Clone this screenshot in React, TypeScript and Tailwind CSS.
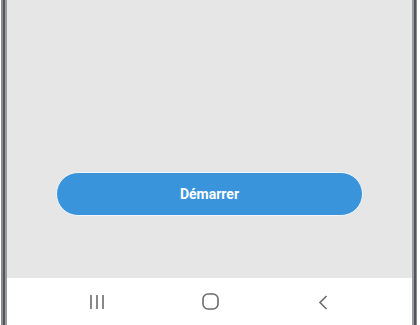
export default function App() {
  return (
    <div className="flex h-[325px] w-[420px] overflow-hidden bg-white font-['Roboto',sans-serif]">
      <div className="w-px" />
      <div className="flex w-[6px]">
        <div className="w-[2px] bg-[#8a8a93]" />
        <div className="w-[2px] bg-[#55555c]" />
        <div className="w-[2px] bg-[#9a9aa3]" />
      </div>
      <div className="flex flex-1 flex-col">
        <div className="flex h-[278px] flex-col justify-end bg-[#e6e6e6] px-[49px] pb-[62px]">
          <button className="flex h-[44px] w-full items-center justify-center rounded-full border border-[#f2f6fa] bg-[#3a94dc] text-[14px] font-bold text-white">
            Démarrer
          </button>
        </div>
        <div className="relative flex-1 bg-white">
          <svg className="absolute left-[82px] top-[16px]" width="16" height="16" viewBox="0 0 16 16">
            <path d="M2 1v14M8 1v14M14 1v14" stroke="#6b6b6b" strokeWidth="1.6" fill="none" />
          </svg>
          <svg className="absolute left-[195px] top-[15px]" width="17" height="17" viewBox="0 0 17 17">
            <rect x="1" y="1" width="15" height="15" rx="5" stroke="#6b6b6b" strokeWidth="1.6" fill="none" />
          </svg>
          <svg className="absolute left-[311px] top-[17px]" width="11" height="15" viewBox="0 0 11 15">
            <path d="M8.5 1L2 7.5L8.5 14" stroke="#6b6b6b" strokeWidth="1.6" fill="none" />
          </svg>
        </div>
      </div>
      <div className="flex w-[5px]">
        <div className="w-[2px] bg-[#9a9aa3]" />
        <div className="w-[2px] bg-[#55555c]" />
        <div className="w-px bg-[#8a8a93]" />
      </div>
      <div className="w-[3px]" />
    </div>
  );
}
